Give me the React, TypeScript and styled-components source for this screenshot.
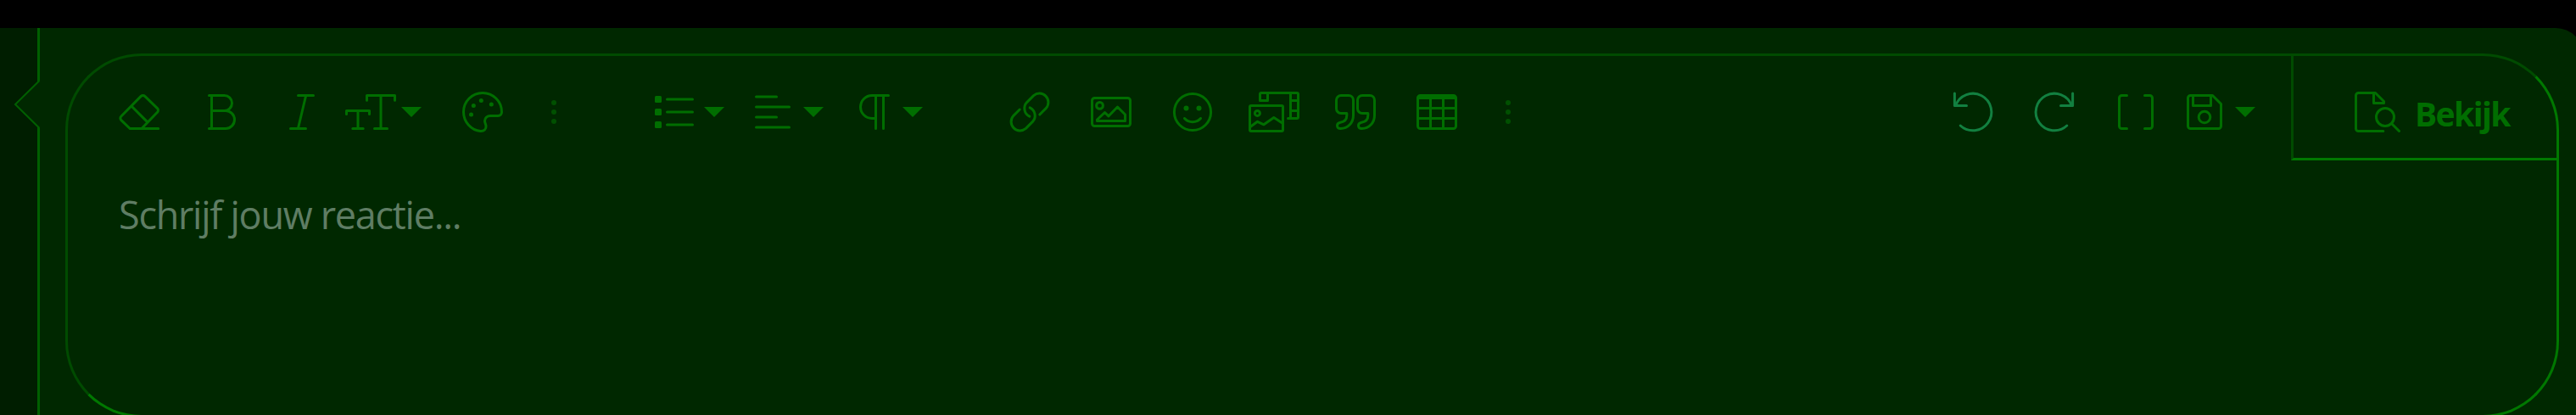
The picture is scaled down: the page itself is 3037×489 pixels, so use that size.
import React from 'react'
import styled, { createGlobalStyle } from 'styled-components'

const GREEN = '#006e00'
const TEAL = '#128040'

const App = () => {
  return (
    <Page>
      <GlobalStyle />
      <Gutter />
      <Message>
        <Pointer viewBox="0 0 32 60">
          <path d="M31 2L3 30L31 58H32V2Z" fill="#002800" />
          <path d="M31.5 2L3 30L31.5 58" stroke="#005f00" strokeWidth="2" fill="none" />
        </Pointer>
        <Editor>
          <Toolbar>
            <Group>
              <Button>
                <Icon width={48}>
                  <path d="M13.2 43.5L2.9 33.6a3.2 3.2 0 0 1 0-4.6L26.2 5.4a3.2 3.2 0 0 1 4.6 0L45.5 19.7a3.2 3.2 0 0 1 0 4.6L27 43.5M13.2 43.5H46.7M15.2 17.2L33.6 35.6" />
                </Icon>
              </Button>
              <Button>
                <Icon width={36}>
                  <path d="M4.5 4.5H22.5a9 9 0 0 1 0 18H7.5M22.5 22.5H24a10.5 10.5 0 0 1 0 21H4.5M7.5 4.5V43.5" />
                </Icon>
              </Button>
              <Button>
                <Icon width={36}>
                  <path d="M13.5 4.5H31.5M4.5 43.5H22.5M22.7 4.5L13.4 43.5" />
                </Icon>
              </Button>
              <DropButton $left={3}>
                <Icon width={60}>
                  <path d="M1.5 26.5V22.5H28.5V26.5M15 22.5V43.5M8.8 43.5H21.2M25.5 10.2V4.5H58.5V10.2M42 4.5V43.5M34.5 43.5H49.5" />
                </Icon>
                <Caret />
              </DropButton>
              <Button>
                <Icon width={48}>
                  <path d="M46.5 24C46.5 11.5 36.5 1.5 24 1.5S1.5 11.5 1.5 24C1.5 35.5 10.5 45.6 21.5 46.5C25.6 46.8 28.4 44.2 28 40.5C27.7 38 26.5 36.5 26.5 34.5C26.5 31 29.5 28.5 33 28.5H42C44.8 28.5 46.5 26.5 46.5 24Z" />
                  <Dot cx="22.3" cy="10.6" r="2.5" />
                  <Dot cx="13.3" cy="16.4" r="2.5" />
                  <Dot cx="34.3" cy="15" r="2.5" />
                  <Dot cx="10.5" cy="27" r="2.5" />
                </Icon>
              </Button>
              <More />
            </Group>
            <Group $gap={72}>
              <DropButton $left={11}>
                <Icon width={48}>
                  <path d="M14.5 9H44.5M14.5 24H44.5M14.5 39H44.5" />
                  <Square y="5" />
                  <Square y="20" />
                  <Square y="35" />
                </Icon>
                <Caret />
              </DropButton>
              <DropButton $left={12}>
                <Icon width={42}>
                  <path d="M1.5 6H25.5M1.5 18H40.5M1.5 30H25.5M1.5 42H40.5" />
                </Icon>
                <Caret />
              </DropButton>
              <DropButton $left={18}>
                <Icon width={42}>
                  <path d="M34.5 4.5H15a13.5 13.5 0 0 0 0 27h4.5M19.5 4.5V43.5M28.5 4.5V43.5" />
                </Icon>
                <Caret />
              </DropButton>
            </Group>
            <Group $gap={54}>
              <Button>
                <Icon width={48}>
                  <path d={LINK} />
                  <path d={LINK} transform="rotate(180 24 24)" />
                </Icon>
              </Button>
              <Button>
                <Icon width={48}>
                  <rect x="1.5" y="7.5" width="45" height="33" rx="3" />
                  <circle cx="10.5" cy="16.4" r="3.9" />
                  <path d="M7.5 34.5V33L16.5 24.5L21 28.8L31.5 18L40.5 27V34.5Z" />
                </Icon>
              </Button>
              <Button>
                <Icon width={48}>
                  <circle cx="24" cy="24" r="21.6" />
                  <path d="M14.5 31.5C19.3 37 28.7 37 33.5 31.5" />
                  <Dot cx="16.5" cy="19.5" r="3" />
                  <Dot cx="31.5" cy="19.5" r="3" />
                </Icon>
              </Button>
              <Button>
                <Icon width={60}>
                  <rect x="1.5" y="16.5" width="39" height="30" rx="1.5" />
                  <circle cx="10.4" cy="25.4" r="3" />
                  <path d="M2 41.5L10.5 35.3L18 38.8L29.8 30.5L40.5 37.5" />
                  <path d="M13.5 10.5V3a1.5 1.5 0 0 1 1.5-1.5H57a1.5 1.5 0 0 1 1.5 1.5V30a1.5 1.5 0 0 1-1.5 1.5H46.5M13.5 10.5H22.5V1.5M49.5 1.5V31.5M49.5 10.5H58.5M49.5 22.5H58.5" />
                </Icon>
              </Button>
              <Button>
                <Icon width={48}>
                  <path d={QUOTE} />
                  <path d={QUOTE} transform="translate(25 0)" />
                </Icon>
              </Button>
              <Button>
                <Icon width={48}>
                  <rect x="1.5" y="4.5" width="45" height="39" rx="3" />
                  <path d="M1.5 7.5H46.5M1.5 19.5H46.5M1.5 31.5H46.5M16.5 7.5V43.5M31.5 7.5V43.5" />
                </Icon>
              </Button>
              <More />
            </Group>
            <Group $end>
              <Button>
                <Icon width={48} $color={TEAL}>
                  <path d={UNDO} />
                </Icon>
              </Button>
              <Button>
                <Icon width={48} $color={TEAL}>
                  <path d={UNDO} transform="matrix(-1 0 0 1 48 0)" />
                </Icon>
              </Button>
              <Button>
                <Icon width={42}>
                  <path d="M10.5 4.5H4.5a3 3 0 0 0-3 3V40.5a3 3 0 0 0 3 3H10.5M31.5 4.5H37.5a3 3 0 0 1 3 3V40.5a3 3 0 0 1-3 3H31.5" />
                </Icon>
              </Button>
              <DropButton $left={12}>
                <Icon width={42}>
                  <path d="M4.5 4.5H30.5L40.5 14.5V40.5a3 3 0 0 1-3 3H4.5a3 3 0 0 1-3-3V7.5a3 3 0 0 1 3-3ZM7.5 4.5V16.5H28.5V4.5" />
                  <circle cx="21" cy="30" r="6.8" />
                </Icon>
                <Caret />
              </DropButton>
            </Group>
            <PreviewTab>
              <Icon width={54}>
                <path d="M33.8 46.5H4.5a3 3 0 0 1-3-3V4.5a3 3 0 0 1 3-3H24.5L34.5 11.5V13.5H22.5V1.5" />
                <circle cx="36" cy="30" r="10.5" />
                <path d="M44 38L52.5 46.5" />
              </Icon>
              <TabLabel>Bekijk</TabLabel>
            </PreviewTab>
          </Toolbar>
          <Placeholder>Schrijf jouw reactie...</Placeholder>
        </Editor>
      </Message>
    </Page>
  )
}

const LINK =
  'M35.8 27L43.4 19.4A10.5 10.5 0 0 0 28.6 4.6L20.6 12.6A10.5 10.5 0 0 0 23.8 29.2'
const QUOTE =
  'M7 4.5H16a5.5 5.5 0 0 1 5.5 5.5V28C21.5 36.8 15 43.5 6.5 43.5C3.7 43.5 2.5 42.5 2.5 40C2.5 37.5 3.8 36.6 6.3 36.2C11 35.5 13.8 32.5 13.8 28V25.5H7A5.5 5.5 0 0 1 1.5 20V10A5.5 5.5 0 0 1 7 4.5Z'
const UNDO = 'M9.2 40A21.8 21.8 0 1 0 3.6 16.4M2.4 2V16.5H16.5'

const Caret = () => (
  <CaretSvg viewBox="0 0 24 12">
    <path d="M0 0H24L12 12Z" />
  </CaretSvg>
)

const More = () => (
  <MoreButton>
    <MoreDot />
    <MoreDot />
    <MoreDot />
  </MoreButton>
)

const GlobalStyle = createGlobalStyle`
  body {
    margin: 0;
    background: #000;
    overflow: hidden;
  }
`
const Page = styled.div`
  display: flex;
  box-sizing: border-box;
  width: 3037px;
  height: 489px;
  padding-top: 33px;
  overflow: hidden;
  font-family: 'Segoe UI', 'Open Sans', 'Noto Sans', sans-serif;
`
const Gutter = styled.div`
  flex: none;
  width: 44px;
  background: #001e00;
`
const Message = styled.div`
  position: relative;
  flex: none;
  box-sizing: border-box;
  width: 3002px;
  height: 500px;
  padding: 30px 29px 0 30px;
  border-left: 3px solid #005f00;
  border-top-right-radius: 33px;
  background: #002800;
`
const Pointer = styled.svg`
  position: absolute;
  left: -32px;
  top: 60px;
  width: 32px;
  height: 60px;
`
const Editor = styled.div`
  box-sizing: border-box;
  width: 2940px;
  height: 429px;
  border: 3px solid;
  border-color: #004b00 #007800 #007800 #004b00;
  border-radius: 90px;
`
const Toolbar = styled.div`
  display: flex;
  height: 123px;
  padding-left: 36px;
`
const Group = styled.div<{ $gap?: number; $end?: boolean }>`
  display: flex;
  align-items: center;
  padding-top: 9px;
  margin-left: ${(p) => (p.$end ? 'auto' : `${p.$gap || 0}px`)};
  margin-right: ${(p) => (p.$end ? 18 : 0)}px;
`
const Button = styled.div`
  display: flex;
  align-items: center;
  justify-content: center;
  width: 96px;
  height: 96px;
`
const DropButton = styled.div<{ $left: number }>`
  display: flex;
  align-items: center;
  justify-content: space-between;
  box-sizing: border-box;
  width: 117px;
  height: 96px;
  padding: 0 24px 0 ${(p) => p.$left}px;
`
const Icon = styled.svg<{ $color?: string }>`
  flex: none;
  height: 48px;
  overflow: visible;
  fill: none;
  color: ${(p) => p.$color || GREEN};
  stroke: currentColor;
  stroke-width: 3px;
  stroke-linecap: round;
  stroke-linejoin: round;
`
const Dot = styled.circle`
  fill: currentColor;
  stroke: none;
`
const Square = styled.rect.attrs({ width: 8, height: 8, rx: 1.5 })`
  fill: currentColor;
  stroke: none;
`
const CaretSvg = styled.svg`
  flex: none;
  width: 24px;
  height: 12px;
  fill: ${GREEN};
`
const MoreButton = styled.div`
  display: flex;
  flex-direction: column;
  align-items: center;
  justify-content: center;
  gap: 5.2px;
  width: 72px;
  height: 96px;
`
const MoreDot = styled.div`
  width: 6px;
  height: 6px;
  border-radius: 50%;
  background: #005000;
`
const PreviewTab = styled.div`
  display: flex;
  align-items: center;
  box-sizing: border-box;
  width: 313px;
  padding: 12px 0 0 72px;
  border-left: 3px solid #004b00;
  border-bottom: 3px solid #007800;
`
const TabLabel = styled.div`
  margin: 3px 0 0 17px;
  color: ${GREEN};
  font-size: 39px;
  font-weight: 700;
  letter-spacing: -1.6px;
  line-height: 52px;
`
const Placeholder = styled.div`
  padding: 34px 60px 0;
  color: #5f7d64;
  font-size: 45px;
  letter-spacing: -1.28px;
  line-height: 60px;
`

export default App
